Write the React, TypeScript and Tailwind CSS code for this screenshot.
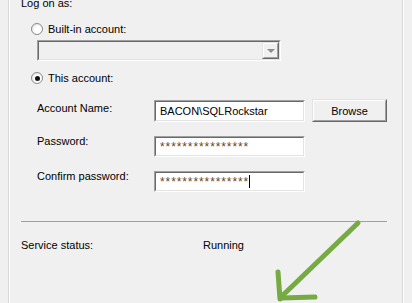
import React from 'react';

function Radio({ checked, label }: { checked?: boolean; label: string }) {
  return (
    <div className="flex items-center h-[16px] ml-[22px]">
      <div className="w-[12px] h-[12px] rounded-full border border-[#8a8a8a] bg-[radial-gradient(circle_at_60%_60%,#ffffff_40%,#d4d4d4_100%)] flex items-center justify-center">
        {checked && <div className="w-[5px] h-[5px] rounded-full bg-[#111]" />}
      </div>
      <span className="ml-[5px]">{label}</span>
    </div>
  );
}

function Sunken({ className, children, fill = 'bg-white' }: { className?: string; children?: React.ReactNode; fill?: string }) {
  return (
    <div className={`border border-t-[#a0a0a0] border-l-[#a0a0a0] border-b-white border-r-white ${className ?? ''}`}>
      <div className={`h-full border border-t-[#696969] border-l-[#696969] border-b-[#e3e3e3] border-r-[#e3e3e3] ${fill} flex items-center`}>
        {children}
      </div>
    </div>
  );
}

function Raised({ className, children }: { className?: string; children?: React.ReactNode }) {
  return (
    <div className={`border border-t-[#e3e3e3] border-l-[#e3e3e3] border-b-[#696969] border-r-[#696969] ${className ?? ''}`}>
      <div className="h-full border border-t-white border-l-white border-b-[#a0a0a0] border-r-[#a0a0a0] bg-[#f0f0f0] flex items-center justify-center">
        {children}
      </div>
    </div>
  );
}

export default function App() {
  return (
    <div className="relative w-[412px] h-[303px] overflow-hidden bg-[#f0f0f0] text-[11px] leading-[16px] text-black font-['Liberation_Sans',Arial,sans-serif]">
      <div className="ml-[8px] w-[395px] h-full border-l border-r border-l-[#d9d9d9] border-r-[#d9d9d9] shadow-[inset_1px_0_0_#fff,1px_0_0_#fff]">
        <div className="flex flex-col">
          <div className="-mt-[5px] ml-[12px] h-[16px]">Log on as:</div>

          <div className="mt-[10px]">
            <Radio label="Built-in account:" />
          </div>

          <div className="mt-[3px] ml-[28px] w-[244px] h-[21px] flex">
            <Sunken className="w-full h-full" fill="bg-[#f0f0f0] justify-end">
              <Raised className="w-[17px] h-full">
                <div className="w-0 h-0 border-l-[4px] border-r-[4px] border-t-[4px] border-l-transparent border-r-transparent border-t-[#8c8c8c]" />
              </Raised>
            </Sunken>
          </div>

          <div className="mt-[9px]">
            <Radio checked label="This account:" />
          </div>

          <div className="mt-[13px] ml-[28px] flex items-start">
            <div className="w-[117px] mt-[1px]">Account Name:</div>
            <Sunken className="w-[151px] h-[22px] mt-[1px]">
              <span className="ml-[4px]">BACON\SQLRockstar</span>
            </Sunken>
            <Raised className="ml-[7px] w-[75px] h-[23px]">
              <span>Browse</span>
            </Raised>
          </div>

          <div className="mt-[14px] ml-[28px] flex items-start">
            <div className="w-[117px] -mt-[3px]">Password:</div>
            <Sunken className="w-[151px] h-[21px]">
              <span className="ml-[4px] text-[12px] tracking-[0.9px] text-[#6b4520]">****************</span>
            </Sunken>
          </div>

          <div className="mt-[14px] ml-[28px] flex items-start">
            <div className="w-[117px] -mt-[3px]">Confirm password:</div>
            <Sunken className="w-[151px] h-[21px]">
              <span className="ml-[4px] text-[12px] tracking-[0.9px] text-[#6b4520]">****************</span>
              <div className="w-[1px] h-[13px] bg-black" />
            </Sunken>
          </div>

          <div className="mt-[29px] ml-[12px] w-[366px] h-[1px] bg-[#a0a0a0]" />

          <div className="mt-[15px] ml-[12px] flex">
            <div className="w-[182px]">Service status:</div>
            <div>Running</div>
          </div>
        </div>
      </div>

      <svg className="absolute left-0 top-0 pointer-events-none" width="412" height="303" viewBox="0 0 412 303">
        <g stroke="#75ab42" strokeWidth="5" strokeLinecap="round" fill="none">
          <line x1="358" y1="223" x2="281" y2="297" />
          <line x1="278" y1="272" x2="280" y2="299" />
          <line x1="281" y1="298" x2="315" y2="297" />
        </g>
      </svg>
    </div>
  );
}
